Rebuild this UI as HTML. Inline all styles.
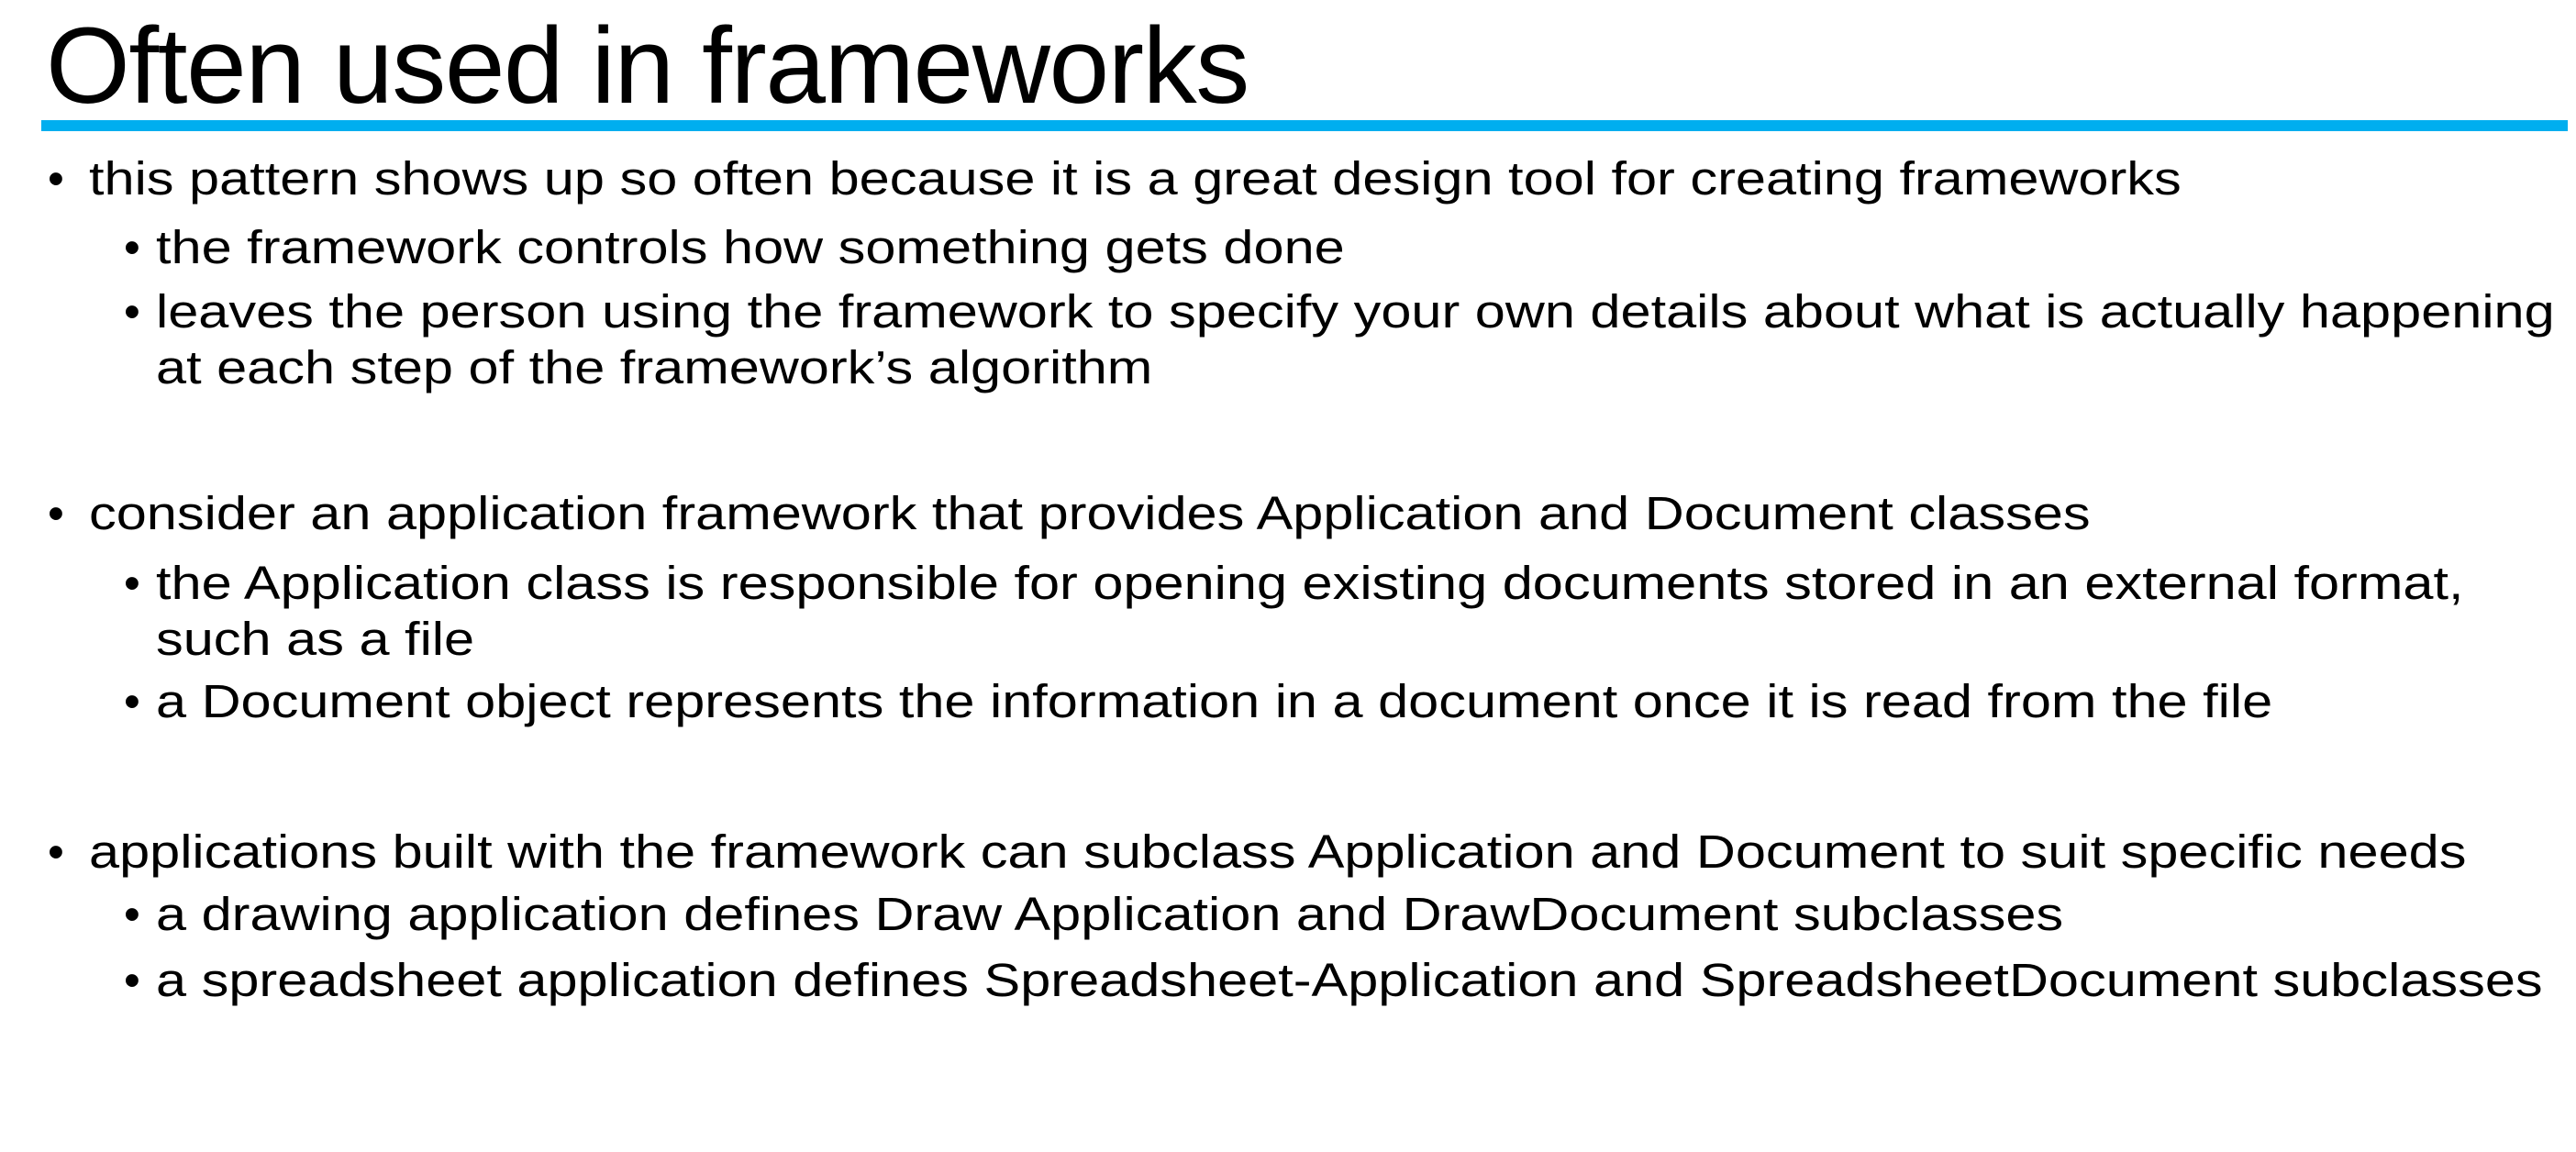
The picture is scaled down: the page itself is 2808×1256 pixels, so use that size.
<!DOCTYPE html>
<html><head><meta charset="utf-8"><style>
html,body{margin:0;padding:0;background:#fff;}
body{width:2808px;height:1256px;position:relative;overflow:hidden;font-family:"Liberation Sans",sans-serif;color:#000;}
.t{position:absolute;left:50px;top:2px;font-size:118px;line-height:140px;white-space:nowrap;letter-spacing:-1.4px;}
.bar{position:absolute;left:45px;top:131px;width:2754px;height:12px;background:#00aeef;}
.l{position:absolute;font-size:51px;line-height:60px;white-space:nowrap;transform:scaleX(1.166);transform-origin:0 0;}
.b{position:absolute;font-size:51px;line-height:60px;}
</style></head><body>
<div class="t">Often used in frameworks</div>
<div class="bar"></div>

<div class="b" style="left:52px;top:165px">•</div><div class="l" style="left:97px;top:165px">this pattern shows up so often because it is a great design tool for creating frameworks</div>
<div class="b" style="left:135px;top:240px">•</div><div class="l" style="left:170px;top:240px">the framework controls how something gets done</div>
<div class="b" style="left:135px;top:310px">•</div><div class="l" style="left:170px;top:310px">leaves the person using the framework to specify your own details about what is actually happening</div>
<div class="l" style="left:170px;top:371px">at each step of the framework’s algorithm</div>

<div class="b" style="left:52px;top:530px">•</div><div class="l" style="left:97px;top:530px">consider an application framework that provides Application and Document classes</div>
<div class="b" style="left:135px;top:606px">•</div><div class="l" style="left:170px;top:606px">the Application class is responsible for opening existing documents stored in an external format,</div>
<div class="l" style="left:170px;top:667px">such as a file</div>
<div class="b" style="left:135px;top:735px">•</div><div class="l" style="left:170px;top:735px">a Document object represents the information in a document once it is read from the file</div>

<div class="b" style="left:52px;top:899px">•</div><div class="l" style="left:97px;top:899px">applications built with the framework can subclass Application and Document to suit specific needs</div>
<div class="b" style="left:135px;top:967px">•</div><div class="l" style="left:170px;top:967px">a drawing application defines Draw Application and DrawDocument subclasses</div>
<div class="b" style="left:135px;top:1039px">•</div><div class="l" style="left:170px;top:1039px">a spreadsheet application defines Spreadsheet-Application and SpreadsheetDocument subclasses</div>
</body></html>
